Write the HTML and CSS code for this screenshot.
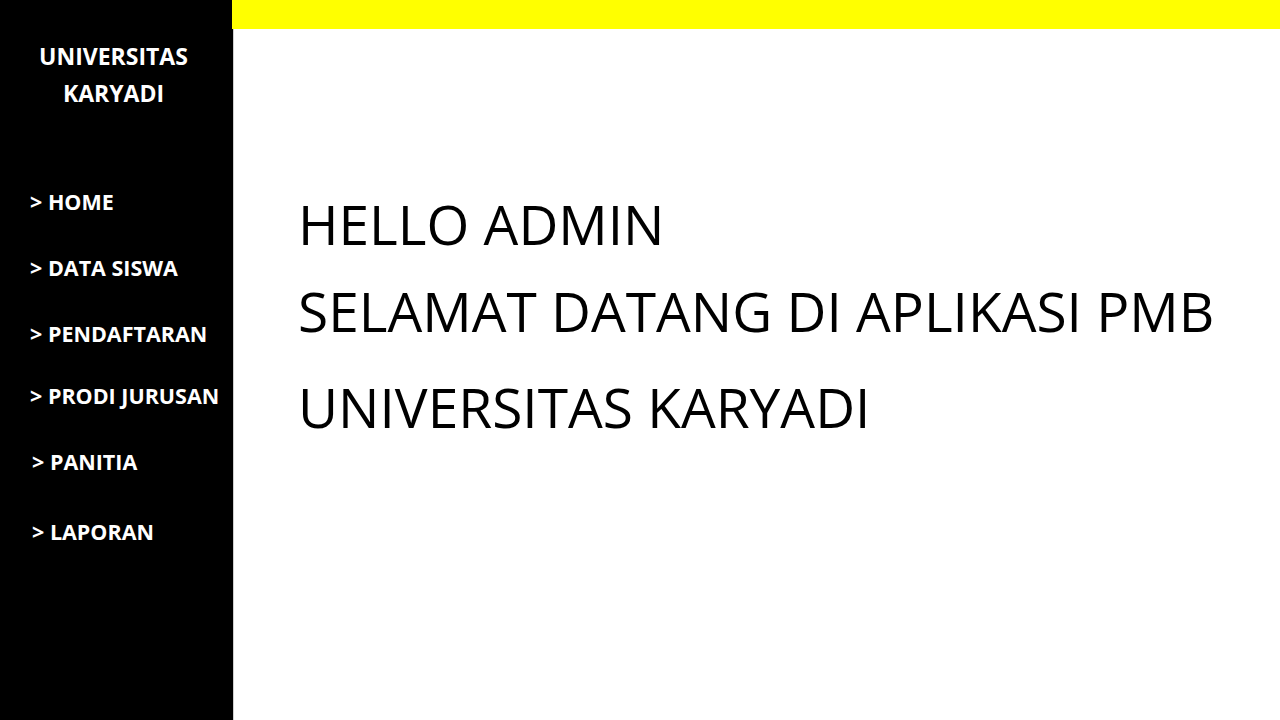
FILE: index.html
```html
<!DOCTYPE html>
<html>
<head>
<meta charset="utf-8">
<title>PMB Universitas Karyadi</title>
<link rel="stylesheet" href="styles.css">
</head>
<body>
<div class="app">
  <aside class="sidebar">
    <div class="brand">UNIVERSITAS<br>KARYADI</div>
    <nav class="menu">
      <a class="item" href="#">&gt; HOME</a>
      <a class="item" href="#">&gt; DATA SISWA</a>
      <a class="item" href="#">&gt; PENDAFTARAN</a>
      <a class="item up" href="#">&gt; PRODI JURUSAN</a>
      <a class="item shift" href="#">&gt; PANITIA</a>
      <a class="item shift down" href="#">&gt; LAPORAN</a>
    </nav>
  </aside>
  <main class="main">
    <div class="topbar"></div>
    <section class="welcome">
      <h1 class="line">HELLO ADMIN</h1>
      <h1 class="line">SELAMAT DATANG DI APLIKASI PMB</h1>
      <h1 class="line last">UNIVERSITAS KARYADI</h1>
    </section>
  </main>
</div>
</body>
</html>
```
FILE: styles.css
```css
html, body {
  margin: 0;
  padding: 0;
  height: 100%;
  background: #ffffff;
}
body {
  font-family: "Open Sans", "Noto Sans", sans-serif;
}
.app {
  display: flex;
  height: 720px;
  width: 1280px;
  overflow: hidden;
}
.sidebar {
  width: 233px;
  flex: 0 0 233px;
  background: #000000;
  color: #ffffff;
  box-shadow: 1px 0 0 #cfcfcf;
  display: flex;
  flex-direction: column;
}
.brand {
  margin-top: 38px;
  width: 227px;
  text-align: center;
  font-weight: 700;
  font-size: 23px;
  line-height: 37px;
}
.menu {
  margin-top: 75px;
  display: flex;
  flex-direction: column;
  gap: 36px;
  padding-left: 30px;
}
.item {
  color: #ffffff;
  text-decoration: none;
  font-weight: 700;
  font-size: 21.5px;
  line-height: 30px;
  white-space: nowrap;
}
.item.up {
  margin-top: -4px;
}
.item.down {
  margin-top: 4px;
}
.item.shift {
  padding-left: 2px;
}
.main {
  flex: 1;
  display: flex;
  flex-direction: column;
}
.topbar {
  height: 29px;
  background: #ffff00;
  margin-left: -1px;
}
.welcome {
  padding-top: 151px;
  padding-left: 65px;
}
.line {
  margin: 0;
  font-weight: 400;
  font-size: 55px;
  line-height: 87px;
  color: #000000;
  white-space: nowrap;
}
.line.last {
  margin-top: 9px;
}
```
